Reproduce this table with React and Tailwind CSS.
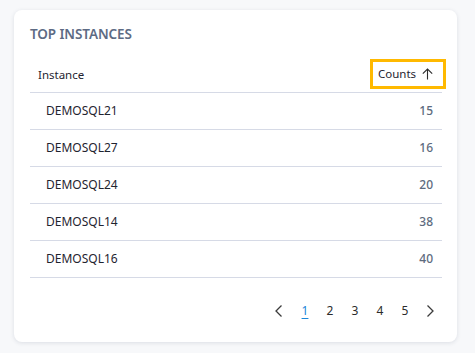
import React from 'react';

const rows = [
  { name: 'DEMOSQL21', count: 15 },
  { name: 'DEMOSQL27', count: 16 },
  { name: 'DEMOSQL24', count: 20 },
  { name: 'DEMOSQL14', count: 38 },
  { name: 'DEMOSQL16', count: 40 },
];

const Chevron = ({ dir }) => (
  <svg width="10" height="14" viewBox="0 0 10 14" fill="none" stroke="#3b3b3b" strokeWidth="1.3">
    {dir === 'left' ? <path d="M7.5 1.5 L2 7 L7.5 12.5" /> : <path d="M2.5 1.5 L8 7 L2.5 12.5" />}
  </svg>
);

const App = () => {
  return (
    <div className="w-[475px] h-[353px] bg-[#f7f8fa] pt-[10px] pl-[14px]" style={{ fontFamily: '"Noto Sans", "Open Sans", sans-serif' }}>
      <div className="w-[443px] h-[332px] bg-white rounded-lg shadow-[0_1px_4px_rgba(60,70,100,0.14)] pl-4 pr-[15px] pt-[15px]">
        {/* Title */}
        <h2 className="text-[13.5px] leading-[18px] font-semibold text-[#5d6b84] tracking-[-0.1px]">TOP INSTANCES</h2>

        {/* Table */}
        <div className="mt-[15px]">
          <div className="flex items-center justify-between h-[35px] border-b border-[#d6dae6]">
            <span className="pl-2 text-[11.5px] text-[#1f2430]">Instance</span>
            <span className="mr-[-4px] mb-[2px] flex items-center gap-[6px] h-[30px] w-[76px] pl-[5px] border-[3px] border-[#ffb900] text-[11.5px] text-[#1f2430]">
              Counts
              <svg width="11" height="12" viewBox="0 0 11 12" fill="none" stroke="#2b2b2b" strokeWidth="1.1">
                <path d="M5.5 11.5 V1 M0.8 5.7 L5.5 1 L10.2 5.7" />
              </svg>
            </span>
          </div>
          {rows.map((r) => (
            <div key={r.name} className="flex items-center justify-between h-[37px] border-b border-[#d6dae6]">
              <span className="pl-4 text-[12px] text-[#1f2430]">{r.name}</span>
              <span className="pr-[9px] text-[12px] font-medium text-[#5d6b7e]">{r.count}</span>
            </div>
          ))}
        </div>

        {/* Pagination */}
        <div className="flex items-center justify-end mt-[24px] pr-[7px] text-[12px] text-[#2b2b2b]">
          <Chevron dir="left" />
          <span className="ml-[16px] w-[10px] text-center text-[#1a86d9] underline underline-offset-[3px]">1</span>
          <span className="ml-[15px] w-[10px] text-center">2</span>
          <span className="ml-[15px] w-[10px] text-center">3</span>
          <span className="ml-[15px] w-[10px] text-center">4</span>
          <span className="ml-[15px] w-[10px] text-center">5</span>
          <span className="ml-[15px]"><Chevron dir="right" /></span>
        </div>
      </div>
    </div>
  );
};

export default App;
